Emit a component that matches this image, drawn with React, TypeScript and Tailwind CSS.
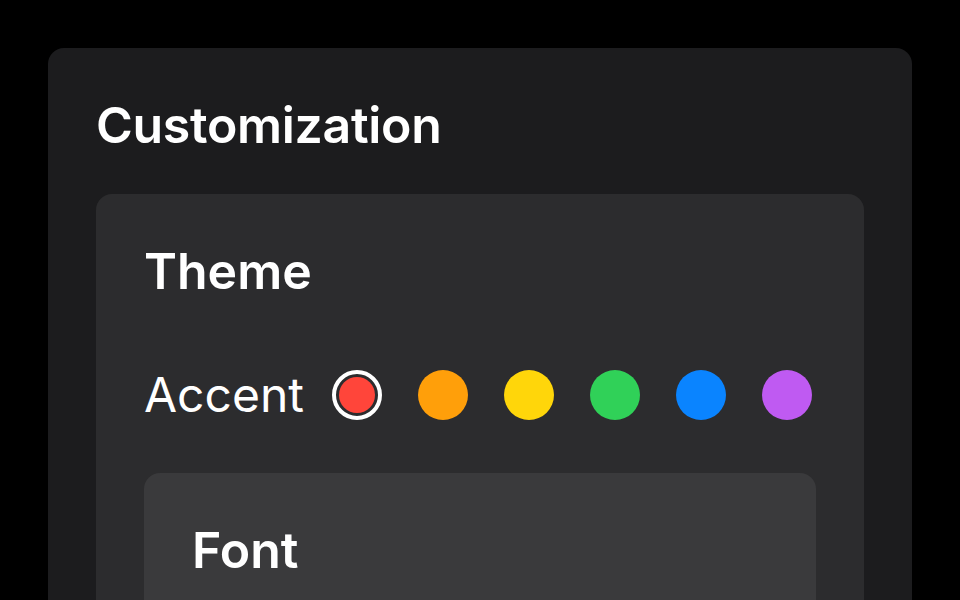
const accents = [
  { name: 'red', color: 'bg-[#ff453a]' },
  { name: 'orange', color: 'bg-[#ff9f0a]' },
  { name: 'yellow', color: 'bg-[#ffd60a]' },
  { name: 'green', color: 'bg-[#30d158]' },
  { name: 'blue', color: 'bg-[#0a84ff]' },
  { name: 'purple', color: 'bg-[#bf5af2]' },
]

function Swatch({ color, selected }: { color: string; selected: boolean }) {
  if (selected) {
    return (
      <div className="w-[50px] h-[50px] rounded-full border-4 border-white p-[3px]">
        <div className={`w-full h-full rounded-full ${color}`} />
      </div>
    )
  }
  return <div className={`w-[50px] h-[50px] rounded-full ${color}`} />
}

export default function App() {
  return (
    <div
      className="h-[600px] bg-black pt-12 px-12 overflow-hidden text-white"
      style={{ fontFamily: 'Inter, "Noto Sans", sans-serif' }}
    >
      <div className="bg-[#1c1c1e] rounded-[16px] p-12 h-[640px]">
        <h1 className="text-[50px] font-[560] leading-[58px] tracking-[-0.3px]">Customization</h1>

        <div className="mt-[40px] bg-[#2c2c2e] rounded-[16px] p-12">
          <h2 className="text-[50px] font-[560] leading-[58px]">Theme</h2>

          <div className="mt-[66px] flex items-center h-[58px]">
            <span className="text-[48px] font-normal leading-[58px] mr-[28px]">Accent</span>
            <div className="flex items-center gap-[36px]">
              {accents.map((a, i) => (
                <Swatch key={a.name} color={a.color} selected={i === 0} />
              ))}
            </div>
          </div>

          <div className="mt-[49px] bg-[#3a3a3c] rounded-[16px] p-12 h-[300px]">
            <h2 className="text-[50px] font-[560] leading-[58px]">Font</h2>
          </div>
        </div>
      </div>
    </div>
  )
}
